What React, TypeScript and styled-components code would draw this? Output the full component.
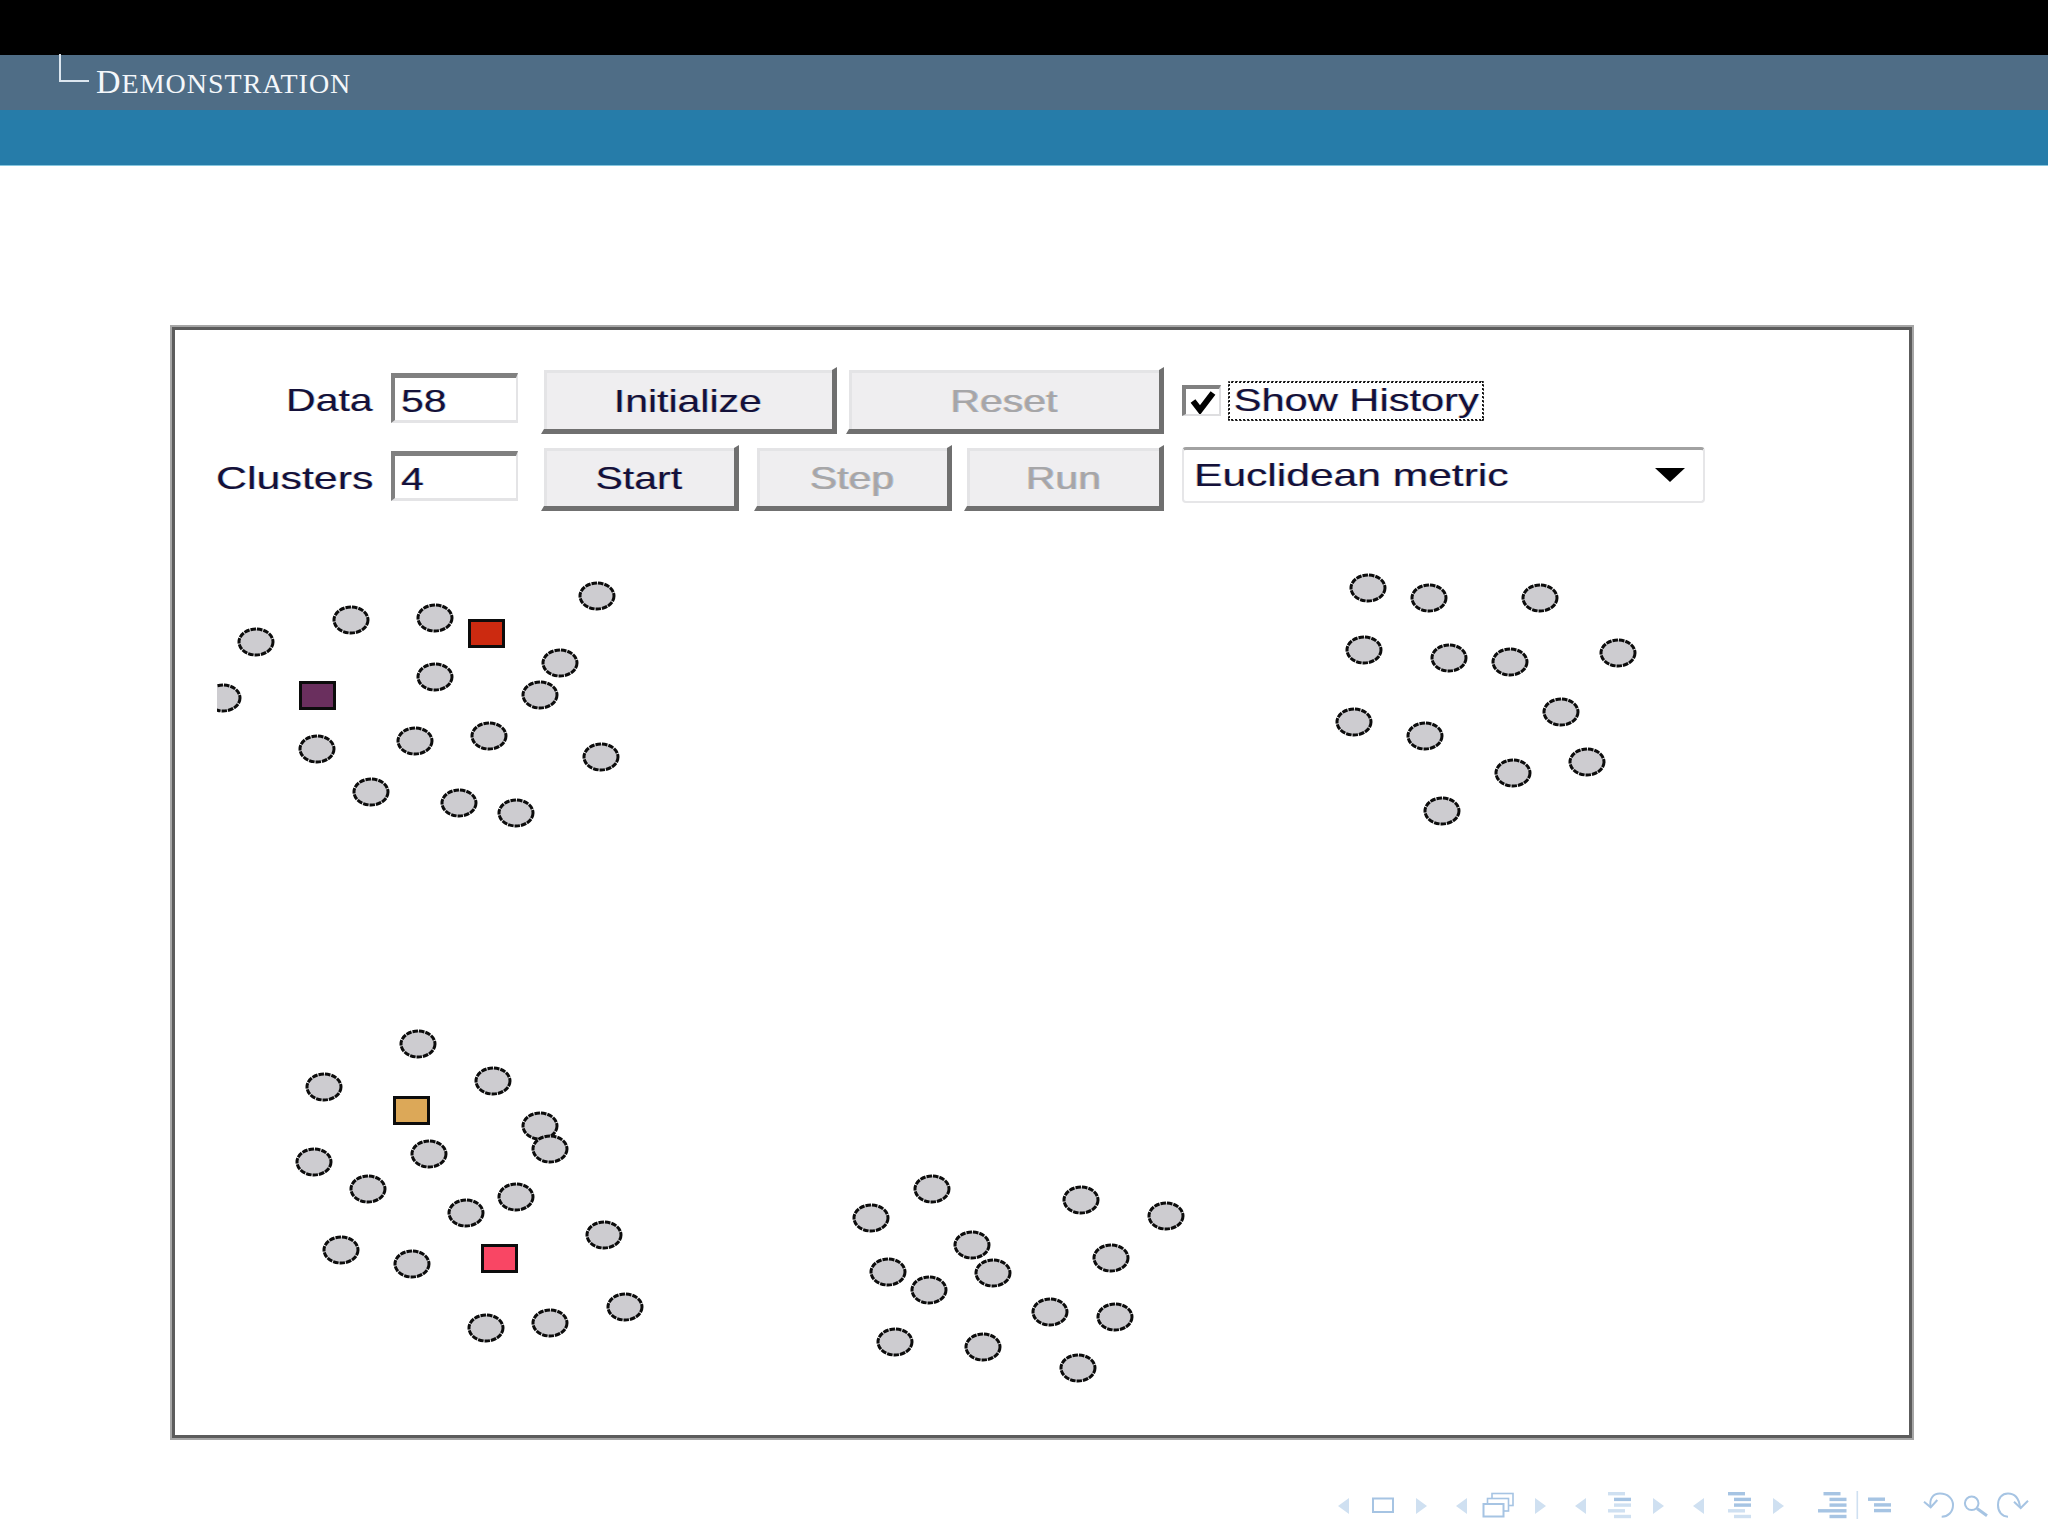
import React from 'react';
import styled, { createGlobalStyle } from 'styled-components';

const Global = createGlobalStyle`
  html, body { margin: 0; padding: 0; background: #fff; }
  #root { width: 2048px; height: 1536px; overflow: hidden; }
`;

const Page = styled.div`
  width: 2048px;
  height: 1536px;
  display: flex;
  flex-direction: column;
  background: #fff;
`;

const TopBar = styled.div`
  height: 55px;
  background: #000;
`;

const SectionBar = styled.div`
  height: 55px;
  background: #4f6d86;
  position: relative;
  display: flex;
  align-items: flex-start;
  padding-left: 96px;
  box-sizing: border-box;
`;

const TreeMark = styled.span`
  position: absolute;
  left: 59px;
  top: -1px;
  width: 30px;
  height: 28px;
  border-left: 2px solid #dce6ef;
  border-bottom: 2px solid #dce6ef;
  box-sizing: border-box;
`;

const SectionTitle = styled.span`
  font-family: "Liberation Serif", serif;
  font-size: 28px;
  letter-spacing: 1px;
  line-height: 54px;
  color: #f4f7fa;
  text-transform: uppercase;
`;

const TitleInitial = styled.span`
  font-size: 34px;
`;

const SubBar = styled.div`
  height: 56px;
  box-sizing: border-box;
  background: #267ca9;
  border-bottom: 1px solid #86c6de;
`;

const Frame = styled.main`
  margin: 159px 0 0 170px;
  width: 1744px;
  height: 1115px;
  box-sizing: border-box;
  border: 2px solid #a6a6a6;
  box-shadow: inset 0 0 0 3px #5c5c5c;
  padding: 40px 4px 0;
  background: #fff;
`;

const Controls = styled.div`
  display: grid;
  grid-template-columns: 197px 127px 621px 521px;
  grid-template-rows: 67px 66px;
  row-gap: 11px;
  font-family: "Liberation Sans", Arial, sans-serif;
  font-size: 32px;
  color: #14113a;
`;

const Wide = styled.span<{ $origin?: string; $sx?: number }>`
  display: inline-block;
  white-space: nowrap;
  transform: scaleX(${(p) => p.$sx || 1.28});
  transform-origin: ${(p) => p.$origin || 'center'};
  text-shadow: -0.7px 0 rgba(200, 130, 40, 0.35), 0.7px 0 rgba(40, 120, 210, 0.35);
`;

const FieldLabel = styled.div`
  display: flex;
  justify-content: flex-end;
  align-items: center;
  height: 50px;
  margin-top: 8px;
`;

const Field = styled.div`
  width: 127px;
  height: 50px;
  margin: 6px 0 0 18px;
  box-sizing: border-box;
  border-top: 5px solid #808080;
  border-left: 4px solid #808080;
  border-right: 2px solid #e4e4e6;
  border-bottom: 3px solid #e4e4e6;
  padding-left: 6px;
  background: #fff;
  line-height: 46px;
`;

const ButtonRow = styled.div`
  display: flex;
  margin-left: 41px;
  width: 623px;
`;

const Bevel = styled.button<{ $w: number; $off?: boolean; $ml?: number }>`
  width: ${(p) => p.$w}px;
  height: 100%;
  padding: 3px 0 0;
  margin: 0 0 0 ${(p) => p.$ml || 0}px;
  font: inherit;
  box-sizing: border-box;
  background: #efeef0;
  color: ${(p) => (p.$off ? '#a6a6a8' : '#14113a')};
  border-style: solid;
  border-color: #fff #6f6f6f #707070 #fff;
  border-width: 3px 5px 5px 3px;
  box-shadow: inset 0 3px 0 #e4e4e6, inset 3px 0 0 #e4e4e6;
`;

const CheckRow = styled.div`
  display: flex;
  align-items: center;
  gap: 7px;
  margin-left: 61px;
  height: 67px;
`;

const CheckBox = styled.div`
  width: 39px;
  height: 31px;
  box-sizing: border-box;
  border-top: 4px solid #808080;
  border-left: 4px solid #808080;
  border-right: 2px solid #dedee0;
  border-bottom: 2px solid #dedee0;
  display: flex;
  align-items: center;
  justify-content: center;
  background: #fff;
`;

const CheckLabel = styled.div`
  width: 256px;
  height: 40px;
  box-sizing: border-box;
  border: 2px dotted #111;
  outline: 1px dotted #555;
  outline-offset: -1px;
  display: flex;
  align-items: center;
  justify-content: center;
`;

const Dropdown = styled.div`
  width: 523px;
  height: 56px;
  margin: 2px 0 0 61px;
  box-sizing: border-box;
  border: 2px solid #e6e6e8;
  border-top: 3px solid #a2a2a2;
  border-radius: 4px;
  display: flex;
  align-items: center;
  justify-content: space-between;
  padding: 0 18px 0 10px;
  background: #fff;
`;

const Caret = styled.span`
  width: 0;
  height: 0;
  border-left: 15px solid transparent;
  border-right: 15px solid transparent;
  border-top: 14px solid #000;
  margin-top: -2px;
`;

const Scatter = styled.svg`
  display: block;
  width: 1690px;
  height: 905px;
  margin: 9px 0 0 41px;
`;

const Footer = styled.footer`
  display: flex;
  justify-content: flex-end;
  margin-top: 40px;
`;

const NavIcons = styled.svg`
  display: block;
  width: 728px;
  height: 40px;
`;

const points: [number, number][] = [
  [223, 698], [256, 642], [351, 620], [435, 618], [597, 596], [560, 663], [435, 677], [540, 695],
  [489, 736], [415, 741], [317, 749], [601, 757], [371, 792], [459, 803], [516, 813],
  [1368, 588], [1429, 598], [1540, 598], [1364, 650], [1449, 658], [1510, 662], [1618, 653],
  [1561, 712], [1354, 722], [1425, 736], [1587, 762], [1513, 773], [1442, 811],
  [418, 1044], [324, 1087], [493, 1081], [540, 1126], [550, 1149], [429, 1154], [314, 1162],
  [368, 1189], [516, 1197], [466, 1213], [604, 1235], [341, 1250], [412, 1264], [625, 1307],
  [550, 1323], [486, 1328],
  [932, 1189], [871, 1218], [1081, 1200], [1166, 1216], [972, 1245], [1111, 1258], [888, 1272],
  [993, 1273], [929, 1290], [1050, 1312], [1115, 1317], [895, 1342], [983, 1347], [1078, 1368],
];

const centroids: { x: number; y: number; fill: string }[] = [
  { x: 468, y: 619, fill: '#cc2a10' },
  { x: 299, y: 681, fill: '#6a2f5e' },
  { x: 393, y: 1096, fill: '#dca858' },
  { x: 481, y: 1244, fill: '#f94664' },
];

const STRONG = '#a6c4e3';
const LIGHT = '#cfe0f1';

const Lines = ({ x, y, rows, color }: { x: number; y: number; rows: [number, number, string?][]; color: string }) => (
  <g>
    {rows.map(([dx, w, c], i) => (
      <rect key={i} x={x + dx} y={y + i * 5.7} width={w} height={3.4} fill={c || color} />
    ))}
  </g>
);

const ArrowL = ({ x }: { x: number }) => <path d={`M${x + 11} 18 L${x} 26 L${x + 11} 34 Z`} fill={LIGHT} />;
const ArrowR = ({ x }: { x: number }) => <path d={`M${x} 18 L${x + 11} 26 L${x} 34 Z`} fill={LIGHT} />;

const Nav = () => (
  <NavIcons viewBox="0 0 728 40">
    <ArrowL x={18} />
    <rect x={53} y={18.5} width={20} height={13.5} fill="none" stroke={STRONG} strokeWidth={2} />
    <ArrowR x={96} />
    <ArrowL x={136} />
    <g fill="#fff" stroke={STRONG} strokeWidth={1.6}>
      <rect x={172} y={13.5} width={21} height={12} />
      <rect x={167.5} y={18.5} width={21} height={12.5} />
      <rect x={163.5} y={24} width={20} height={12.5} strokeWidth={2} />
    </g>
    <ArrowR x={215} />
    <ArrowL x={255} />
    <Lines x={288} y={12} color={LIGHT} rows={[[0, 17], [6, 17, STRONG], [6, 17], [0, 17], [6, 17]]} />
    <ArrowR x={333} />
    <ArrowL x={373} />
    <Lines x={408} y={12} color={STRONG} rows={[[0, 17], [6, 17], [6, 17], [0, 17, LIGHT], [6, 17, LIGHT]]} />
    <ArrowR x={453} />
    <Lines x={498} y={12} color={STRONG} rows={[[5.5, 17], [11.5, 17], [11.5, 17], [0, 28.5], [11.5, 17]]} />
    <rect x={536.5} y={11} width={1.6} height={28} fill={LIGHT} />
    <Lines x={548} y={17.5} color={STRONG} rows={[[0, 17], [6, 17], [6, 17]]} />
    <g fill="none" stroke={STRONG} strokeWidth={2}>
      <path d="M610.7 27 C609 19 613 13.5 620 13.5 C628 13.5 633 19 633 25 C633 32 628 36.7 621.7 36.7" />
      <path d="M604 21.7 L610.7 27.3 L617.3 20" />
      <circle cx={651.7} cy={23.3} r={6.8} />
      <path d="M657 28.5 L667 35.7" strokeWidth={3} />
      <path d="M700 27 C699 19 695 13.5 688 13.5 C682 13.5 678 18 678 25 C678 32 682 36.7 688 36.7" />
      <path d="M694 21.7 L700.7 28 L708 20.7" />
    </g>
  </NavIcons>
);

export default function App() {
  return (
    <Page>
      <Global />
      <TopBar />
      <SectionBar>
        <TreeMark />
        <SectionTitle><TitleInitial>D</TitleInitial>emonstration</SectionTitle>
      </SectionBar>
      <SubBar />
      <Frame>
        <Controls>
          <FieldLabel><Wide $origin="right">Data</Wide></FieldLabel>
          <Field><Wide $origin="left">58</Wide></Field>
          <ButtonRow>
            <Bevel $w={296}><Wide>Initialize</Wide></Bevel>
            <Bevel $w={318} $off $ml={9}><Wide>Reset</Wide></Bevel>
          </ButtonRow>
          <CheckRow>
            <CheckBox>
              <svg width="28" height="24" viewBox="0 0 28 24">
                <path d="M4 11 L11 20 L24 3" fill="none" stroke="#000" strokeWidth="6" />
              </svg>
            </CheckBox>
            <CheckLabel><Wide $sx={1.3}>Show History</Wide></CheckLabel>
          </CheckRow>
          <FieldLabel><Wide $origin="right" $sx={1.34}>Clusters</Wide></FieldLabel>
          <Field><Wide $origin="left">4</Wide></Field>
          <ButtonRow>
            <Bevel $w={198}><Wide>Start</Wide></Bevel>
            <Bevel $w={198} $off $ml={15}><Wide>Step</Wide></Bevel>
            <Bevel $w={200} $off $ml={12}><Wide>Run</Wide></Bevel>
          </ButtonRow>
          <Dropdown>
            <Wide $origin="left" $sx={1.33}>Euclidean metric</Wide>
            <Caret />
          </Dropdown>
        </Controls>
        <Scatter viewBox="217 520 1690 905">
          {points.map(([cx, cy], i) => (
            <ellipse
              key={i}
              cx={cx}
              cy={cy}
              rx={17}
              ry={13}
              fill="#cdccd0"
              stroke="#0c0c0c"
              strokeWidth={3}
              strokeDasharray="5.5 1"
            />
          ))}
          {centroids.map((c) => (
            <rect
              key={c.x}
              x={c.x + 1.5}
              y={c.y + 1.5}
              width={34}
              height={26}
              fill={c.fill}
              stroke="#0c0c0c"
              strokeWidth={3}
            />
          ))}
        </Scatter>
      </Frame>
      <Footer>
        <Nav />
      </Footer>
    </Page>
  );
}
